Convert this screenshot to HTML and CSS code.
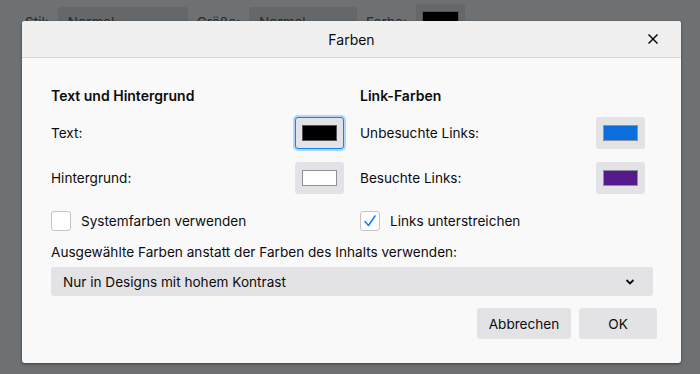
FILE: index.html
```html
<!DOCTYPE html>
<html lang="de">
<head>
    <meta charset="UTF-8">
    <meta name="viewport" content="width=device-width, initial-scale=1.0">
    <title>Farben</title>
    <link rel="stylesheet" href="styles.css">
</head>
<body>
    <div class="page-bar">
        <span class="bar-label">Stil:</span>
        <div class="bar-select bar-select-wide">Normal <span class="bar-arrow">⌄</span></div>
        <span class="bar-label">Größe:</span>
        <div class="bar-select">Normal <span class="bar-arrow">⌄</span></div>
        <span class="bar-label">Farbe:</span>
        <div class="bar-swatch"><span></span></div>
    </div>

    <div class="dialog">
        <div class="dialog-header">
            <div class="dialog-title">Farben</div>
            <button type="button" class="close-button" aria-label="Schließen">
                <svg width="10" height="10" viewBox="0 0 10 10"><path d="M0.5 0.5 L9.5 9.5 M9.5 0.5 L0.5 9.5" stroke="#0c0c0d" stroke-width="1.5" fill="none"/></svg>
            </button>
        </div>
        <div class="dialog-body">
            <div class="columns">
                <div class="column">
                    <div class="group-title">Text und Hintergrund</div>
                    <div class="color-row">
                        <span>Text:</span>
                        <button type="button" class="color-button focused"><span class="swatch swatch-black"></span></button>
                    </div>
                    <div class="color-row">
                        <span>Hintergrund:</span>
                        <button type="button" class="color-button"><span class="swatch swatch-white"></span></button>
                    </div>
                    <label class="check-row">
                        <span class="checkbox"></span>
                        Systemfarben verwenden
                    </label>
                </div>
                <div class="column">
                    <div class="group-title">Link-Farben</div>
                    <div class="color-row">
                        <span>Unbesuchte Links:</span>
                        <button type="button" class="color-button"><span class="swatch swatch-blue"></span></button>
                    </div>
                    <div class="color-row">
                        <span>Besuchte Links:</span>
                        <button type="button" class="color-button"><span class="swatch swatch-purple"></span></button>
                    </div>
                    <label class="check-row">
                        <span class="checkbox">
                            <svg width="14" height="14" viewBox="0 0 14 14"><path d="M2 7.5 L5.5 11.5 L12 2" stroke="#0a84ff" stroke-width="1.6" fill="none" stroke-linecap="round" stroke-linejoin="round"/></svg>
                        </span>
                        Links unterstreichen
                    </label>
                </div>
            </div>
            <div class="override-label">Ausgewählte Farben anstatt der Farben des Inhalts verwenden:</div>
            <div class="select-box">
                <span>Nur in Designs mit hohem Kontrast</span>
                <svg width="10" height="6" viewBox="0 0 10 6"><path d="M1.5 1 L5 4.5 L8.5 1" stroke="#0c0c0d" stroke-width="1.8" fill="none"/></svg>
            </div>
            <div class="dialog-actions">
                <button type="button" class="action-button cancel-button">Abbrechen</button>
                <button type="button" class="action-button ok-button">OK</button>
            </div>
        </div>
    </div>
</body>
</html>
```

FILE: styles.css
```css
body {
    margin: 0;
    height: 374px;
    overflow: hidden;
    background-color: #6e7173;
    font-family: Inter, "Noto Sans", sans-serif;
    font-size: 13.6px;
    color: #0c0c0d;
    position: relative;
}
.page-bar {
    display: flex;
    align-items: center;
    gap: 9px;
    padding: 7px 0 0 25px;
    color: #2a2b2c;
}
.bar-select {
    display: flex;
    justify-content: space-between;
    align-items: center;
    width: 108px;
    height: 30px;
    padding: 0 10px;
    box-sizing: border-box;
    background-color: #65686a;
    border-radius: 3px;
}
.bar-select-wide {
    width: 130px;
}
.bar-arrow {
    font-size: 12px;
}
.bar-swatch {
    width: 49px;
    height: 32px;
    margin-top: -4px;
    background-color: #65686a;
    border-radius: 3px;
    display: flex;
    justify-content: center;
    align-items: center;
}
.bar-swatch span {
    width: 35px;
    height: 16px;
    background-color: #000;
    border: 1px solid #555;
}
.dialog {
    position: absolute;
    left: 22px;
    top: 21px;
    width: 659px;
    height: 342px;
    background-color: #f9f9fa;
    border-radius: 3px;
    box-shadow: 0 1px 3px rgba(0, 0, 0, 0.45);
    overflow: hidden;
}
.dialog-header {
    position: relative;
    height: 36px;
    background-color: #f0f0f0;
    border-bottom: 1px solid #d7d7db;
    display: flex;
    justify-content: center;
    align-items: center;
}
.dialog-title {
    font-size: 14px;
}
.close-button {
    position: absolute;
    right: 23px;
    top: 13px;
    padding: 0;
    border: none;
    background: none;
    display: flex;
}
.dialog-body {
    padding: 28px 24px 0 29px;
}
.columns {
    display: grid;
    grid-template-columns: 293px 285px;
    column-gap: 16px;
}
.group-title {
    font-size: 14px;
    font-weight: 600;
    line-height: 20px;
    margin-bottom: 11px;
}
.color-row {
    display: flex;
    justify-content: space-between;
    align-items: center;
    height: 32px;
    margin-bottom: 13px;
}
.color-button {
    width: 49px;
    height: 32px;
    padding: 0;
    border: none;
    border-radius: 3px;
    background-color: #e3e3e5;
    display: flex;
    justify-content: center;
    align-items: center;
}
.color-button.focused {
    border: 1px solid #0a84ff;
    box-shadow: 0 0 0 2px rgba(10, 132, 255, 0.3);
}
.swatch {
    width: 33px;
    height: 14px;
    border: 1px solid #8f8f9d;
}
.swatch-black {
    background-color: #000;
    border-color: #555;
}
.swatch-white {
    background-color: #fff;
}
.swatch-blue {
    background-color: #0a6fdc;
}
.swatch-purple {
    background-color: #551a8b;
}
.check-row {
    display: flex;
    align-items: center;
    gap: 10px;
    height: 20px;
    margin-top: 17px;
}
.checkbox {
    width: 18px;
    height: 18px;
    border: 1px solid #c4c4c8;
    border-radius: 3px;
    background-color: #fff;
    display: flex;
    justify-content: center;
    align-items: center;
}
.override-label {
    line-height: 20px;
    margin-top: 11px;
}
.select-box {
    display: flex;
    justify-content: space-between;
    align-items: center;
    width: 602px;
    height: 29px;
    margin-top: 5px;
    padding: 0 18px 0 12px;
    box-sizing: border-box;
    background-color: #e3e3e5;
    border-radius: 3px;
}
.dialog-actions {
    display: flex;
    justify-content: flex-end;
    gap: 8px;
    margin-top: 12px;
}
.action-button {
    height: 31px;
    border: none;
    border-radius: 3px;
    background-color: #e3e3e5;
    font-family: inherit;
    font-size: 13.6px;
    color: #0c0c0d;
}
.cancel-button {
    width: 94px;
}
.ok-button {
    width: 78px;
}
```
